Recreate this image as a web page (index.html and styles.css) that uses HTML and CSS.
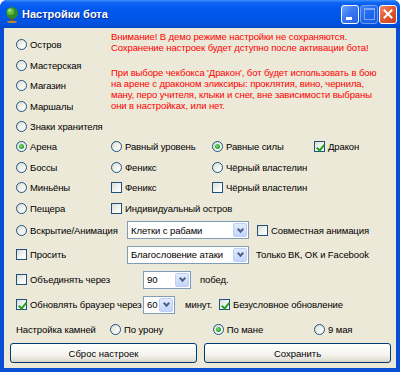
FILE: index.html
```html
<!DOCTYPE html>
<html lang="ru">
<head>
  <meta charset="UTF-8">
  <title>Настройки бота</title>
  <link rel="stylesheet" href="styles.css">
</head>
<body>
  <div class="window">
    <div class="titlebar">
      <svg class="app-icon" width="14" height="17" viewBox="0 0 14 17">
        <rect x="5.5" y="11" width="3" height="5" fill="#7a4a1e"/>
        <ellipse cx="7" cy="16" rx="5" ry="1.2" fill="#b08a3a"/>
        <circle cx="7" cy="7" r="6" fill="#2f8a2a"/>
        <circle cx="5.5" cy="5.5" r="3.5" fill="#5cbd3e"/>
        <circle cx="4.8" cy="4.5" r="1.6" fill="#a6e07a"/>
      </svg>
      <span class="title">Настройки бота</span>
      <div class="title-buttons">
        <span class="tbtn tbtn-min"></span>
        <span class="tbtn tbtn-max"></span>
        <span class="tbtn tbtn-close">
          <svg width="10" height="10" viewBox="0 0 10 10"><path d="M1.5 1.5 L8.5 8.5 M8.5 1.5 L1.5 8.5" stroke="#fff" stroke-width="2" stroke-linecap="square"/></svg>
        </span>
      </div>
    </div>

    <div class="content">
      <!-- Локации и предупреждение -->
      <div class="top">
        <div class="top-options">
          <div class="row"><label class="opt"><span class="radio"></span>Остров</label></div>
          <div class="row"><label class="opt"><span class="radio"></span>Мастерская</label></div>
          <div class="row"><label class="opt"><span class="radio"></span>Магазин</label></div>
          <div class="row"><label class="opt"><span class="radio"></span>Маршалы</label></div>
          <div class="row"><label class="opt"><span class="radio"></span>Знаки хранителя</label></div>
        </div>
        <div class="notice">
          <p>Внимание! В демо режиме настройки не сохраняются.<br>Сохранение настроек будет дступно после активации бота!</p>
          <p>При выборе чекбокса 'Дракон', бот будет использовать в бою<br>на арене с драконом эликсиры: проклятия, вино, чернила,<br>ману, перо учителя, клыки и снег, вне зависимости выбраны<br>они в настройках, или нет.</p>
        </div>
      </div>

      <div class="row">
        <label class="opt c1"><span class="radio checked"></span>Арена</label>
        <label class="opt c2"><span class="radio"></span>Равный уровень</label>
        <label class="opt c3"><span class="radio checked"></span>Равные силы</label>
        <label class="opt"><span class="check checked"></span>Дракон</label>
      </div>
      <div class="row">
        <label class="opt c1"><span class="radio"></span>Боссы</label>
        <label class="opt c2"><span class="radio"></span>Феникс</label>
        <label class="opt c3"><span class="radio"></span>Чёрный властелин</label>
      </div>
      <div class="row">
        <label class="opt c1"><span class="radio"></span>Миньёны</label>
        <label class="opt c2"><span class="check"></span>Феникс</label>
        <label class="opt c3"><span class="check"></span>Чёрный властелин</label>
      </div>
      <div class="row">
        <label class="opt c1"><span class="radio"></span>Пещера</label>
        <label class="opt"><span class="check"></span>Индивидуальный остров</label>
      </div>

      <div class="row row-24">
        <label class="opt w111"><span class="radio"></span>Вскрытие/Анимация</label>
        <div class="select sel-wide"><span>Клетки с рабами</span><span class="arrow"></span></div>
        <label class="opt gap8"><span class="check"></span>Совместная анимация</label>
      </div>
      <div class="row row-25">
        <label class="opt w111"><span class="check"></span>Просить</label>
        <div class="select sel-wide"><span>Благословение атаки</span><span class="arrow"></span></div>
        <span class="gap7">Только ВК, ОК и Facebook</span>
      </div>
      <div class="row row-25">
        <label class="opt w127"><span class="check"></span>Объединять через</label>
        <div class="select sel-90"><span>90</span><span class="arrow"></span></div>
        <span class="gap9">побед.</span>
      </div>
      <div class="row row-25">
        <label class="opt w127"><span class="check checked"></span>Обновлять браузер через</label>
        <div class="select sel-60"><span>60</span><span class="arrow"></span></div>
        <span class="minutes">минут.</span>
        <label class="opt"><span class="check checked"></span>Безусловное обновление</label>
      </div>
      <div class="row row-24">
        <span class="stones">Настройка камней</span>
        <label class="opt c-dmg"><span class="radio"></span>По урону</label>
        <label class="opt c-mana"><span class="radio checked"></span>По мане</label>
        <label class="opt"><span class="radio"></span>9 мая</label>
      </div>

      <div class="buttons">
        <button class="btn">Сброс настроек</button>
        <button class="btn">Сохранить</button>
      </div>
    </div>
  </div>
</body>
</html>
```

FILE: styles.css
```css
/* Базовые стили */
* { box-sizing: border-box; }
body {
  margin: 0;
  font-family: "Liberation Sans", Arial, sans-serif;
  font-size: 9.5px;
  letter-spacing: -0.1px;
  color: #000;
}

/* Окно в стиле XP */
.window {
  width: 400px;
  height: 372px;
  background: #0a4ed6;
  border-radius: 7px 7px 0 0;
  display: flex;
  flex-direction: column;
  overflow: hidden;
}
.titlebar {
  height: 28px;
  flex-shrink: 0;
  display: flex;
  align-items: center;
  padding: 0 3px 0 5px;
  background: linear-gradient(#3d8ffc 0%, #0d63f2 10%, #0058ee 35%, #0054e6 70%, #004fd9 90%, #0046c6 100%);
}
.app-icon { margin-right: 3px; flex-shrink: 0; }
.title {
  color: #fff;
  font-weight: bold;
  font-size: 11px;
  letter-spacing: 0;
  text-shadow: 1px 1px 0 #0a2a8a;
}
.title-buttons {
  margin-left: auto;
  display: flex;
  gap: 1px;
}
.tbtn {
  width: 18px;
  height: 19px;
  border: 1px solid #fff;
  border-radius: 3px;
  background: linear-gradient(135deg, #6fa4ff 0%, #3b78f0 45%, #2a62e6 100%);
  display: flex;
  align-items: center;
  justify-content: center;
  position: relative;
}
.tbtn-min::after {
  content: "";
  position: absolute;
  left: 4px;
  bottom: 3px;
  width: 6px;
  height: 3px;
  background: #fff;
}
.tbtn-max {
  opacity: 0.55;
  border-color: #c8d8ff;
}
.tbtn-max::after {
  content: "";
  width: 9px;
  height: 9px;
  border: 1px solid #dfe8ff;
  border-top-width: 2px;
}
.tbtn-close {
  background: linear-gradient(135deg, #f08a68 0%, #e05a32 45%, #c8401e 100%);
}

/* Содержимое */
.content {
  flex: 1;
  margin: 0 4px 4px;
  background: #ece9d8;
  padding: 3px 0 0 12px;
}
.top { display: flex; }
.top-options { width: 95px; padding-top: 3.8px; flex-shrink: 0; }
.notice {
  color: #f00;
  line-height: 11px;
  white-space: nowrap;
}
.notice p { margin: 0; }
.notice p + p { margin-top: 13.5px; }

.row {
  display: flex;
  align-items: center;
  height: 20.4px;
  white-space: nowrap;
}
.row-24 { height: 24px; }
.row-25 { height: 25px; }

.opt {
  display: flex;
  align-items: center;
}
.c1 { width: 95px; }
.c2 { width: 101px; }
.c3 { width: 102px; }
.w111 { width: 111px; }
.w127 { width: 127px; }
.gap7 { margin-left: 7px; }
.gap8 { margin-left: 8px; }
.gap9 { margin-left: 9px; }
.minutes { width: 44px; padding-left: 10px; }
.stones { width: 94px; }
.c-dmg { width: 102.7px; }
.c-mana { width: 101.3px; }

/* Переключатели и флажки */
.radio,
.check {
  width: 11px;
  height: 11px;
  border: 1px solid #1c5180;
  margin-right: 3px;
  flex-shrink: 0;
  position: relative;
  background: linear-gradient(135deg, #dcdcd4 0%, #f4f4f0 55%, #fff 100%);
}
.radio { border-radius: 50%; }
.radio.checked::after {
  content: "";
  position: absolute;
  left: 2px;
  top: 2px;
  width: 5px;
  height: 5px;
  border-radius: 50%;
  background: radial-gradient(circle at 40% 40%, #6fe06f 0%, #2aaa2a 60%, #1a8a1a 100%);
}
.check.checked::after {
  content: "";
  position: absolute;
  left: 3px;
  top: 0.5px;
  width: 3px;
  height: 6px;
  border-right: 2px solid #21a121;
  border-bottom: 2px solid #21a121;
  transform: rotate(40deg);
}

/* Выпадающие списки */
.select {
  display: flex;
  align-items: center;
  height: 18px;
  border: 1px solid #7f9db9;
  background: #fff;
  padding-left: 3px;
  flex-shrink: 0;
}
.sel-wide { width: 122px; }
.sel-90 { width: 48px; }
.sel-60 { width: 32px; }
.select .arrow {
  margin-left: auto;
  width: 14px;
  height: 14px;
  margin-right: 1px;
  border: 1px solid #bccffa;
  border-radius: 2px;
  background: linear-gradient(#e2ebfe, #c3d4fb);
  position: relative;
}
.select .arrow::after {
  content: "";
  position: absolute;
  left: 3.5px;
  top: 2.5px;
  width: 3px;
  height: 3px;
  border-right: 2px solid #4d6185;
  border-bottom: 2px solid #4d6185;
  transform: rotate(45deg);
}

/* Кнопки */
.buttons {
  display: flex;
  gap: 7px;
  margin: 2px 0 0 -6px;
  width: 381px;
}
.btn {
  flex: 1;
  height: 20px;
  border: 1px solid #003c74;
  border-radius: 3px;
  background: linear-gradient(#fff 0%, #f5f4ef 60%, #e3e0d4 90%, #d6d0c2 100%);
  font: inherit;
  color: #000;
  padding: 0;
}
```
